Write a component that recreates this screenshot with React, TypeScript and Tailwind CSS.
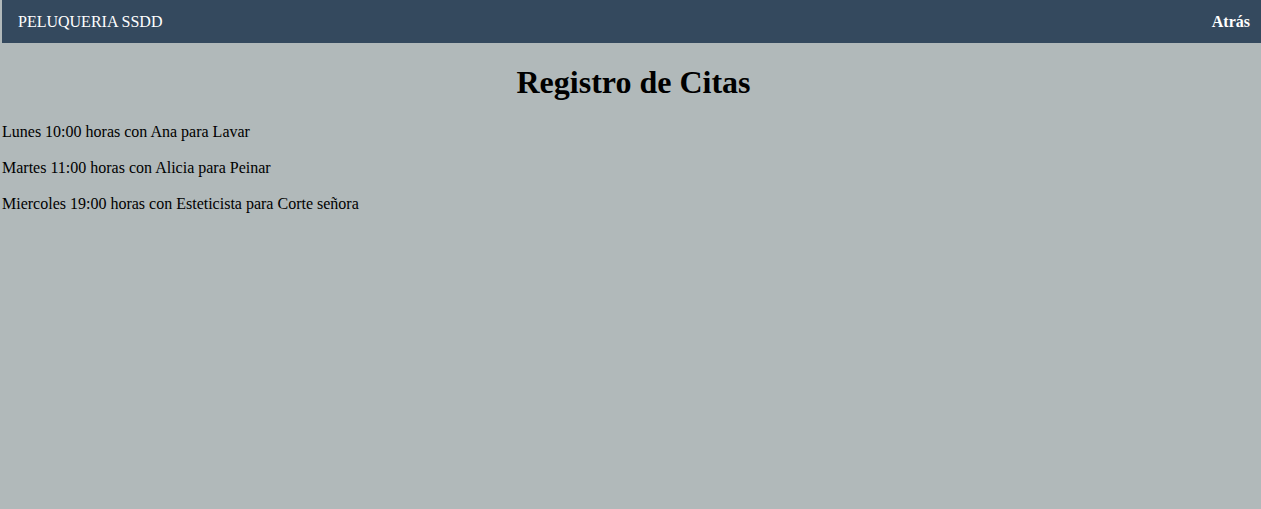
const CITAS = [
  "Lunes 10:00 horas con Ana para Lavar",
  "Martes 11:00 horas con Alicia para Peinar",
  "Miercoles 19:00 horas con Esteticista para Corte señora",
];

export default function App() {
  return (
    <div className="min-h-screen bg-[#b1b9ba] pl-[2px] font-['Liberation_Serif',serif] text-black">
      <nav className="flex h-[43px] items-center justify-between bg-[#34495e] pl-4 pr-[11px] text-white">
        <span className="text-base">PELUQUERIA SSDD</span>
        <a href="#" className="text-base font-bold">Atrás</a>
      </nav>
      <h1 className="my-[21px] pl-1 text-center text-[32px] font-bold leading-[37px]">Registro de Citas</h1>
      {CITAS.map((c) => (
        <p key={c} className="my-4 text-base leading-5">{c}</p>
      ))}
    </div>
  );
}
